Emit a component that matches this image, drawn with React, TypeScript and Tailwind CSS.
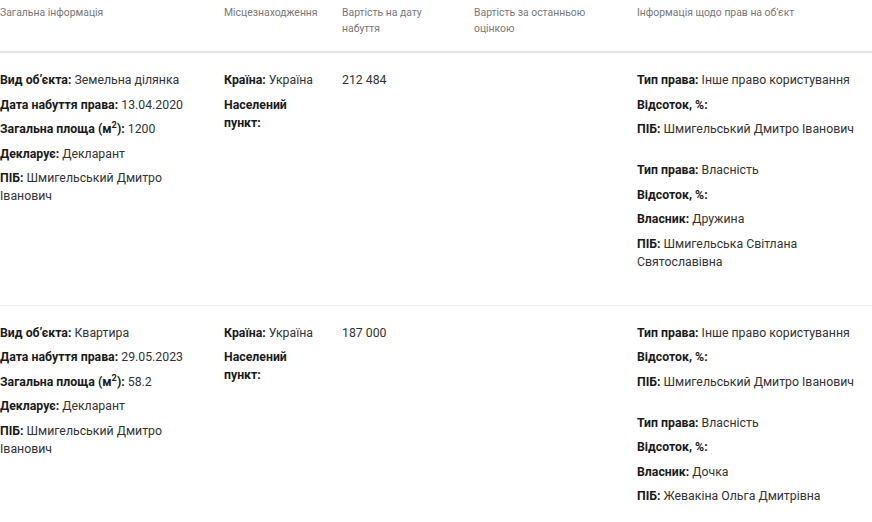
import React from "react";

type Pair = [string, React.ReactNode];

const rows: {
  general: Pair[];
  value: string;
  rights: Pair[][];
}[] = [
  {
    general: [
      ["Вид об’єкта", "Земельна ділянка"],
      ["Дата набуття права", "13.04.2020"],
      ["AREA", "1200"],
      ["Декларує", "Декларант"],
      ["ПІБ", "Шмигельський Дмитро Іванович"],
    ],
    value: "212 484",
    rights: [
      [
        ["Тип права", "Інше право користування"],
        ["Відсоток, %", ""],
        ["ПІБ", "Шмигельський Дмитро Іванович"],
      ],
      [
        ["Тип права", "Власність"],
        ["Відсоток, %", ""],
        ["Власник", "Дружина"],
        ["ПІБ", "Шмигельська Світлана Святославівна"],
      ],
    ],
  },
  {
    general: [
      ["Вид об’єкта", "Квартира"],
      ["Дата набуття права", "29.05.2023"],
      ["AREA", "58.2"],
      ["Декларує", "Декларант"],
      ["ПІБ", "Шмигельський Дмитро Іванович"],
    ],
    value: "187 000",
    rights: [
      [
        ["Тип права", "Інше право користування"],
        ["Відсоток, %", ""],
        ["ПІБ", "Шмигельський Дмитро Іванович"],
      ],
      [
        ["Тип права", "Власність"],
        ["Відсоток, %", ""],
        ["Власник", "Дочка"],
        ["ПІБ", "Жевакіна Ольга Дмитрівна"],
      ],
    ],
  },
];

function Field({ label, value }: { label: string; value: React.ReactNode }) {
  return (
    <p className="leading-[18px]">
      <span className="font-bold text-[#1a1a1a]">
        {label === "AREA" ? (
          <>
            Загальна площа (м<sup>2</sup>)
          </>
        ) : (
          label
        )}
        :
      </span>
      {value ? " " : ""}
      {value}
    </p>
  );
}

export default function App() {
  const cols = "grid grid-cols-[224px_118px_132px_163px_1fr]";
  return (
    <div className="bg-white min-h-screen font-['Roboto',sans-serif] text-[#333]">
      {/* Header */}
      <div className={`${cols} border-b-2 border-[#e2e2e2] pt-[5px] h-[53px] text-[10.4px] leading-[16px] text-[#777]`}>
        <div className="pr-5">Загальна інформація</div>
        <div className="pr-5">Місцезнаходження</div>
        <div className="pr-5">Вартість на дату набуття</div>
        <div className="pr-5">Вартість за останньою оцінкою</div>
        <div className="pr-5">Інформація щодо прав на об’єкт</div>
      </div>

      {/* Rows */}
      {rows.map((row, i) => (
        <div
          key={i}
          className={`${cols} text-[12.3px] pt-[18px] pb-[34px] ${i === 0 ? "border-b border-[#efefef]" : ""}`}
        >
          <div className="pr-5 flex flex-col gap-[6.5px]">
            {row.general.map(([l, v], j) => (
              <Field key={j} label={l} value={v} />
            ))}
          </div>
          <div className="pr-5 flex flex-col gap-[6.5px]">
            <Field label="Країна" value="Україна" />
            <Field label="Населений пункт" value="" />
          </div>
          <div className="pr-5 leading-[18px]">{row.value}</div>
          <div className="pr-5" />
          <div className="flex flex-col gap-[23px]">
            {row.rights.map((group, g) => (
              <div key={g} className="flex flex-col gap-[6.5px]">
                {group.map(([l, v], j) => (
                  <Field key={j} label={l} value={v} />
                ))}
              </div>
            ))}
          </div>
        </div>
      ))}
    </div>
  );
}
